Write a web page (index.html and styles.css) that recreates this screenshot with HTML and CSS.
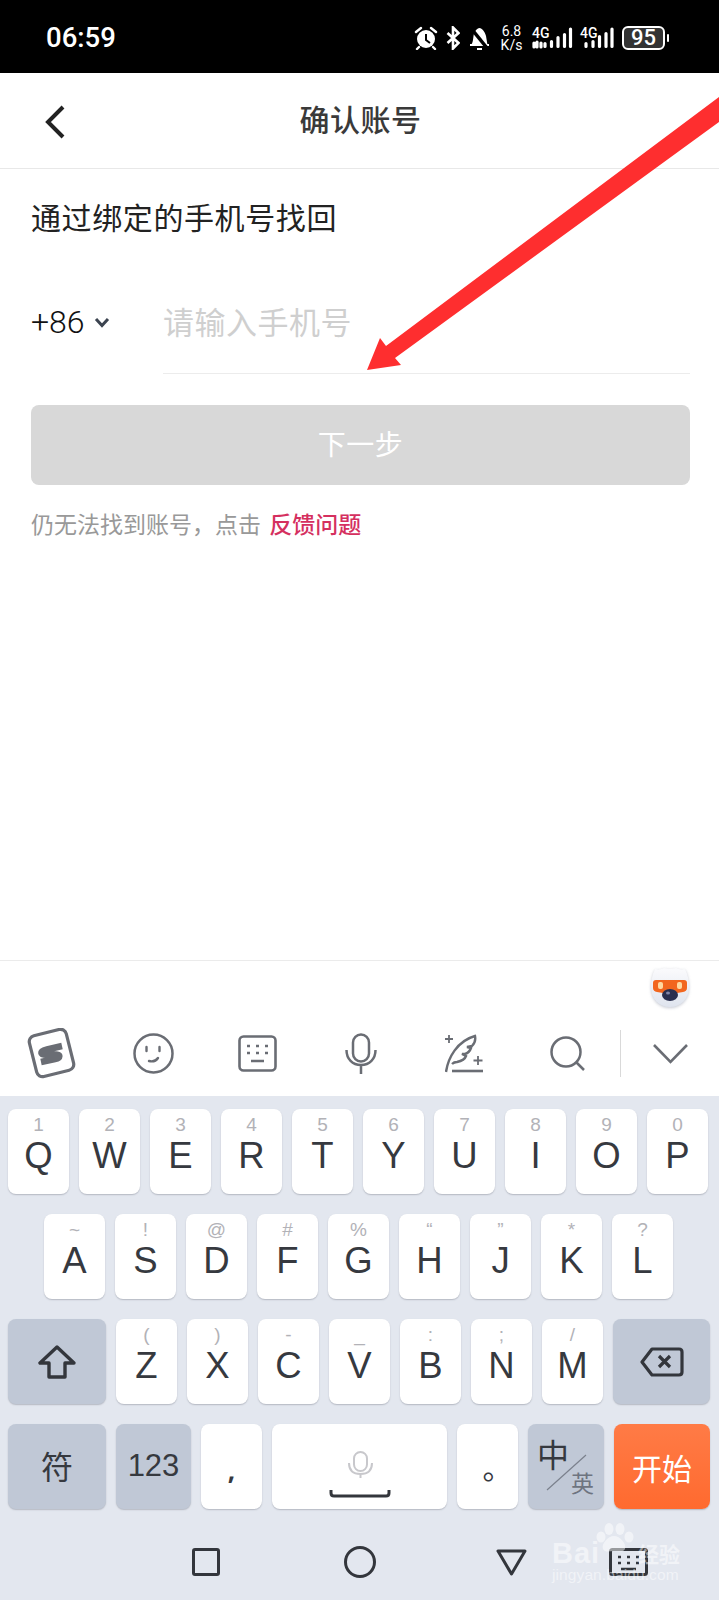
FILE: index.html
```html
<!DOCTYPE html>
<html lang="zh-CN">
<head>
<meta charset="utf-8">
<title>确认账号</title>
<link rel="stylesheet" href="styles.css">
</head>
<body>
<div class="page">
  <div class="status">
    <span class="time">06:59</span>
    <div class="status-icons">
      <svg class="s-alarm" width="24" height="24" viewBox="0 0 24 24"><circle cx="12" cy="13" r="9" fill="#fff"/><path d="M12 8v6l4 3" fill="none" stroke="#000" stroke-width="2"/><path d="M2 6l5-4M22 6l-5-4M5 21l-2 2M19 21l2 2" stroke="#fff" stroke-width="2.4" stroke-linecap="round"/></svg>
      <svg class="s-bt" width="14" height="24" viewBox="0 0 14 24"><path d="M1.500 7l11 10-5.500 5.500V1.500L12.500 7l-11 10" fill="none" stroke="#fff" stroke-width="2.600"/></svg>
      <svg class="s-bell" width="21" height="24" viewBox="0 0 21 24"><path d="M2 19c2-2 2-6 2.500-9C5 6 8 2 10.500 2S16 6 17 10l1.500 9z" fill="#fff"/><path d="M1 19h19" stroke="#fff" stroke-width="2"/><path d="M8 23h5" stroke="#fff" stroke-width="2"/><path d="M1 1l17 21" stroke="#000" stroke-width="3.500"/></svg>
      <div class="speed"><span>6.8</span><span>K/s</span></div>
      <div class="sig sig-a">
        <span class="g4">4G</span>
        <svg width="41" height="22" viewBox="0 0 41 22"><path d="M2 20v-4M5 20v-5M9 20v-4M13 19.500v-3M19.500 19.500v-5M26 19.500v-9M32.500 19.500v-12M38.500 19.500V2" fill="none" stroke="#fff" stroke-width="3.200" stroke-linecap="round"/></svg>
      </div>
      <div class="sig sig-b">
        <span class="g4">4G</span>
        <svg width="34" height="22" viewBox="0 0 34 22"><path d="M6 19.500v-3M13 19.500v-5M19.500 19.500v-10M26 19.500v-13M32 19.500V2" fill="none" stroke="#fff" stroke-width="3.200" stroke-linecap="round"/></svg>
      </div>
      <div class="battery"><span>95</span></div>
      <span class="nub"></span>
    </div>
  </div>

  <header class="topbar">
    <svg class="back" width="20" height="34" viewBox="0 0 20 34"><path d="M18 2L3 17l15 15" fill="none" stroke="#222" stroke-width="4"/></svg>
    <h1 class="title">确认账号</h1>
  </header>

  <main class="main">
    <h2 class="heading">通过绑定的手机号找回</h2>
    <div class="phone">
      <div class="code"><span>+86</span><svg width="16" height="11" viewBox="0 0 16 11"><path d="M2 2l6 6.500L14 2" fill="none" stroke="#3c4450" stroke-width="3"/></svg></div>
      <div class="input">请输入手机号</div>
    </div>
    <div class="next">下一步</div>
    <p class="hint">仍无法找到账号，点击 <span class="link">反馈问题</span></p>
  </main>

  <section class="toolbar">
    <div class="mascot-row">
      <svg class="mascot" width="38" height="41" viewBox="0 0 38 41">
        <defs><linearGradient id="eg" x1="0" y1="0" x2="0" y2="1"><stop offset="0" stop-color="#fbfbfd"/><stop offset="1" stop-color="#dfe4ee"/></linearGradient></defs>
        <path d="M4 3c4 1 7 0 9-1 3 1 9 1 12 0 2 1 5 2 9 1 3 6 4 12 4 18 0 12-8 20-19 20S0 33 0 21C0 15 1 9 4 3z" fill="url(#eg)"/>
        <path d="M5 14h28q3 0 3 3v5q0 3-4 4l-6 1H12l-6-1q-4-1-4-4v-5q0-3 3-3z" fill="#f2661e"/>
        <rect x="7" y="16" width="5" height="7" rx="2" fill="#ffd9a0"/><rect x="26" y="16" width="5" height="7" rx="2" fill="#ffd9a0"/>
        <ellipse cx="19" cy="29" rx="8" ry="6" fill="#2a2f4f"/><ellipse cx="17" cy="27" rx="2" ry="1.500" fill="#7f85a8"/>
      </svg>
    </div>
    <div class="tool-row">
      <svg class="t-s" width="50" height="51" viewBox="0 0 50 51"><rect x="5.500" y="4" width="38" height="42" rx="6" transform="rotate(-14 24.500 25)" fill="none" stroke="#6a6d74" stroke-width="3.200"/><path d="M35 18L20 21.500C12 23.500 13 27 20 27L28 26.500C34 26 33.500 30 28 31L14 34" fill="none" stroke="#6a6d74" stroke-width="6.500"/></svg>
      <svg class="t-smile" width="41" height="41" viewBox="0 0 41 41"><circle cx="20.500" cy="20.500" r="19" fill="none" stroke="#6a6d74" stroke-width="2.500"/><path d="M13.500 14v4M26.500 14v4" stroke="#6a6d74" stroke-width="2.400" stroke-linecap="round"/><path d="M16 28c4 1 7 0 9-3" fill="none" stroke="#6a6d74" stroke-width="2.400" stroke-linecap="round"/></svg>
      <svg class="t-kb" width="39" height="37" viewBox="0 0 39 37"><rect x="1.500" y="1.500" width="36" height="34" rx="4" fill="none" stroke="#6a6d74" stroke-width="2.600"/><path d="M9 11h3M18 11h3M27 11h3M9 18h3M18 18h3M27 18h3M13 26h13" stroke="#6a6d74" stroke-width="2.400"/></svg>
      <svg class="t-mic" width="32" height="41" viewBox="0 0 32 41"><rect x="8" y="1.500" width="16" height="27" rx="8" fill="none" stroke="#6a6d74" stroke-width="2.500"/><path d="M1.500 17c0 9 6 15 14.500 15s14.500-6 14.500-15M16 32v9" fill="none" stroke="#6a6d74" stroke-width="2.500"/></svg>
      <svg class="t-pen" width="38" height="39" viewBox="0 0 38 39"><path d="M1 38C3 24 12 7 30 2c1 5-1 8-3 10l-5 1 4 1c-1 3-3 5-6 6l-3 0 4 2c-1 3-4 5-9 6-2 0-4 1-5 2" fill="none" stroke="#6a6d74" stroke-width="2.400"/><path d="M7 37h31" stroke="#6a6d74" stroke-width="2.600"/><path d="M4 1v8M0 5h8M33 22v9M28.500 26.500h9" stroke="#6a6d74" stroke-width="1.800"/></svg>
      <svg class="t-search" width="35" height="35" viewBox="0 0 35 35"><circle cx="16" cy="16" r="14.500" fill="none" stroke="#6a6d74" stroke-width="2.500"/><path d="M26 26l8 8" stroke="#6a6d74" stroke-width="2.500"/></svg>
      <span class="t-div"></span>
      <svg class="t-down" width="35" height="21" viewBox="0 0 35 21"><path d="M1 2l16.500 17L34 2" fill="none" stroke="#6a6d74" stroke-width="2.600"/></svg>
    </div>
  </section>

  <section class="keyboard">
    <div class="row r1">
      <div class="key"><i>1</i><b>Q</b></div><div class="key"><i>2</i><b>W</b></div><div class="key"><i>3</i><b>E</b></div><div class="key"><i>4</i><b>R</b></div><div class="key"><i>5</i><b>T</b></div><div class="key"><i>6</i><b>Y</b></div><div class="key"><i>7</i><b>U</b></div><div class="key"><i>8</i><b>I</b></div><div class="key"><i>9</i><b>O</b></div><div class="key"><i>0</i><b>P</b></div>
    </div>
    <div class="row r2">
      <div class="key"><i>~</i><b>A</b></div><div class="key"><i>!</i><b>S</b></div><div class="key"><i>@</i><b>D</b></div><div class="key"><i>#</i><b>F</b></div><div class="key"><i>%</i><b>G</b></div><div class="key"><i>“</i><b>H</b></div><div class="key"><i>”</i><b>J</b></div><div class="key"><i>*</i><b>K</b></div><div class="key"><i>?</i><b>L</b></div>
    </div>
    <div class="row r3">
      <div class="key wide fn center"><svg width="38" height="34" viewBox="0 0 38 34"><path d="M19 2L2 18h9v14h16V18h9z" fill="none" stroke="#33363c" stroke-width="3.400" stroke-linejoin="round"/></svg></div>
      <div class="key"><i>(</i><b>Z</b></div><div class="key"><i>)</i><b>X</b></div><div class="key"><i>-</i><b>C</b></div><div class="key"><i>_</i><b>V</b></div><div class="key"><i>:</i><b>B</b></div><div class="key"><i>;</i><b>N</b></div><div class="key"><i>/</i><b>M</b></div>
      <div class="key back-key fn center"><svg width="44" height="30" viewBox="0 0 44 30"><path d="M12 2h27q3 0 3 3v20q0 3-3 3H12L2 15z" fill="none" stroke="#33363c" stroke-width="3.200" stroke-linejoin="round"/><path d="M19 9l11 11M30 9L19 20" stroke="#33363c" stroke-width="3.200"/></svg></div>
    </div>
    <div class="row r4">
      <div class="key wide fn center fu">符</div>
      <div class="key k123 fn center num">123</div>
      <div class="key center comma">,</div>
      <div class="key space center"><svg width="62" height="48" viewBox="0 0 62 48"><rect x="25" y="1" width="13" height="19" rx="6.500" fill="none" stroke="#c8c8cc" stroke-width="2"/><path d="M20 12c0 8 5 11 11.500 11S43 20 43 12M31.500 23v4" fill="none" stroke="#c8c8cc" stroke-width="2"/><path d="M2 39v3q0 3 3 3h52q3 0 3-3v-3" fill="none" stroke="#33363c" stroke-width="3"/></svg></div>
      <div class="key center period">。</div>
      <div class="key lang fn">
        <span class="zh">中</span>
        <svg class="slash" width="41" height="37" viewBox="0 0 41 37"><path d="M1 36L40 1" stroke="#7b818d" stroke-width="1.200"/></svg>
        <span class="en">英</span>
      </div>
      <div class="key go center">开始</div>
    </div>
    <nav class="navbar">
      <svg class="n-sq" width="28" height="28" viewBox="0 0 28 28"><rect x="1.500" y="1.500" width="25" height="25" rx="1.500" fill="none" stroke="#33363c" stroke-width="3"/></svg>
      <svg class="n-ci" width="32" height="32" viewBox="0 0 32 32"><circle cx="16" cy="16" r="14.500" fill="none" stroke="#33363c" stroke-width="3"/></svg>
      <svg class="n-tr" width="31" height="27" viewBox="0 0 31 27"><path d="M2 2h27L15.500 25z" fill="none" stroke="#33363c" stroke-width="3" stroke-linejoin="round"/></svg>
      <svg class="n-kb" width="39" height="28" viewBox="0 0 39 28"><rect x="1.500" y="1.500" width="36" height="25" rx="2" fill="none" stroke="#33363c" stroke-width="3"/><path d="M9 9h3M18 9h3M27 9h3M9 15h3M18 15h3M27 15h3M12 21h15" stroke="#33363c" stroke-width="2.600"/></svg>
    </nav>
  </section>

  <svg class="arrow" width="719" height="400" viewBox="0 0 719 400"><path d="M719 97V122L395 358 401 365 367 370 380 338 386 346z" fill="#fe2e2f"/></svg>

  <div class="watermark">
    <svg class="paw" width="40" height="30" viewBox="0 0 40 30"><g fill="#fff" fill-opacity=".5"><ellipse cx="6" cy="14" rx="4.500" ry="5.500"/><ellipse cx="14" cy="6" rx="4.500" ry="6"/><ellipse cx="25" cy="6" rx="4.500" ry="6"/><ellipse cx="34" cy="14" rx="4.500" ry="5.500"/><path d="M19 13c6 0 13 8 11 13-2 4-7 2-11 2s-9 2-11-2c-2-5 5-13 11-13z"/></g></svg>
    <div class="wm-top"><span class="wm-bai">Bai</span><span class="wm-jy">经验</span></div>
    <div class="wm-url">jingyan.baidu.com</div>
  </div>
</div>
</body>
</html>
```

FILE: styles.css
```css
* { box-sizing: border-box; }
html, body { margin: 0; padding: 0; }
body { width: 719px; height: 1600px; overflow: hidden; background: #fff; font-family: "Noto Sans CJK SC", "Noto Sans", sans-serif; }
.page { position: relative; width: 719px; height: 1600px; display: flex; flex-direction: column; overflow: hidden; }

/* status bar */
.status { height: 73px; background: #000; color: #fff; display: flex; align-items: center; padding: 0 50px 0 46px; flex: none; }
.time { font-family: Roboto, sans-serif; font-size: 27.500px; line-height: 30px; font-weight: 500; position: relative; top: 1px; }
.status-icons { display: flex; align-items: center; margin-left: auto; height: 30px; position: relative; top: 1px; }
.s-bt { margin-left: 8px; }
.s-bell { margin-left: 9px; }
.speed { margin-left: 10px; width: 23px; display: flex; flex-direction: column; align-items: center; font-family: Roboto, sans-serif; font-size: 14px; line-height: 14px; font-weight: 400; }
.sig { position: relative; height: 22px; flex: none; }
.sig svg { display: block; }
.sig-a { margin-left: 9px; width: 41px; }
.sig-b { margin-left: 7px; width: 34px; }
.g4 { position: absolute; left: 0; top: -1px; font-family: Roboto, sans-serif; font-size: 14px; line-height: 14px; font-weight: 500; }
.battery { margin-left: 8px; width: 43px; height: 24px; border: 2px solid #fff; border-radius: 6px; background: #333; display: flex; align-items: center; justify-content: center; font-family: Roboto, sans-serif; font-size: 22px; font-weight: 500; }
.nub { width: 2px; height: 8px; margin-left: 2px; background: #fff; border-radius: 1px; }

/* top bar */
.topbar { height: 96px; flex: none; border-bottom: 1px solid #e8e8e8; display: flex; align-items: center; justify-content: center; position: relative; }
.back { position: absolute; left: 45px; top: 32px; }
.title { margin: 0; font-size: 30px; line-height: 40px; font-weight: 500; color: #3a3a3a; letter-spacing: .5px; position: relative; top: -3px; left: 1px; }

/* form */
.main { flex: 1; padding: 0 29px 0 31px; }
.heading { margin: 26px 0 0; font-size: 30px; line-height: 42px; font-weight: 400; color: #222; letter-spacing: .6px; }
.phone { display: flex; margin-top: 43px; height: 94px; }
.code { width: 132px; flex: none; display: flex; align-items: center; gap: 9px; font-family: Roboto, sans-serif; font-size: 32px; font-weight: 300; color: #111; height: 84px; }
.input { flex: 1; height: 94px; line-height: 82px; border-bottom: 1px solid #ececec; font-size: 31px; color: #cfcfcf; letter-spacing: .5px; }
.next { margin-top: 31px; height: 80px; border-radius: 8px; background: #d8d8d8; color: #fff; font-size: 28px; line-height: 76px; text-align: center; letter-spacing: .5px; }
.hint { margin: 21px 0 0; font-size: 23px; line-height: 34px; color: #999; }
.link { color: #d5305f; font-weight: 500; margin-left: 3px; }

/* toolbar */
.toolbar { flex: none; height: 136px; border-top: 1px solid #ebebeb; background: #fff; }
.mascot-row { display: flex; justify-content: flex-end; padding: 5px 30px 0 0; height: 46px; }
.mascot { filter: drop-shadow(0 1px 1.500px rgba(70, 80, 110, .3)); }
.tool-row { display: flex; align-items: center; height: 50px; margin-top: 21px; padding-left: 27px; }
.t-smile { margin-left: 56px; }
.t-kb { margin-left: 64px; }
.t-mic { margin-left: 68px; }
.t-pen { margin-left: 68px; }
.t-search { margin-left: 67px; }
.t-div { width: 1px; height: 47px; margin-left: 35px; background: #d9d9d9; }
.t-down { margin-left: 32px; }

/* keyboard */
.keyboard { flex: none; height: 504px; background: #e3e7ef; padding-top: 13px; display: flex; flex-direction: column; gap: 20px; }
.row { display: flex; gap: 10px; height: 85px; flex: none; }
.r1 { padding-left: 8px; }
.r2 { padding-left: 44px; }
.r3, .r4 { padding-left: 8px; }
.key { width: 61px; height: 85px; flex: none; background: #fff; border-radius: 8px; box-shadow: 0 1px 1.500px #b4b8c2; display: flex; flex-direction: column; align-items: center; font-family: "Liberation Sans", sans-serif; color: #36393f; position: relative; }
.key i { font-style: normal; font-size: 19px; line-height: 20px; height: 20px; margin-top: 6px; color: #b2b2b7; font-weight: 400; }
.key b { font-weight: 400; font-size: 36.500px; line-height: 40px; margin-top: 1px; }
.center { justify-content: center; }
.fn { background: #c0c8d6; }
.wide { width: 98px; }
.back-key { width: 97px; }
.fu { font-family: "Noto Sans CJK SC", sans-serif; font-size: 32px; padding-bottom: 4px; }
.k123 { width: 75px; }
.num { font-size: 31px; padding-bottom: 2px; }
.comma { padding-top: 6px; font-weight: 700; font-size: 26px; font-family: "Noto Sans", sans-serif; }
.period { font-family: "Noto Sans CJK SC", sans-serif; font-weight: 400; font-size: 30px; padding-left: 20px; padding-bottom: 2px; }
.space { width: 175px; padding-top: 16px; }
.lang { width: 76px; }
.zh { font-family: "Noto Sans CJK SC", sans-serif; font-size: 32px; line-height: 38px; align-self: flex-start; margin: 10px 0 0 9px; }
.en { font-family: "Noto Sans CJK SC", sans-serif; font-size: 23px; line-height: 26px; color: #6e7480; align-self: flex-end; margin: -3px 10px 0 0; }
.slash { position: absolute; left: 18px; top: 30px; }
.go { width: 96px; background: linear-gradient(#ff7b46, #ff6a2f); color: #fff; font-family: "Noto Sans CJK SC", sans-serif; font-size: 30px; }

/* nav */
.navbar { display: flex; align-items: center; height: 28px; margin-top: 19px; padding-left: 192px; }
.n-ci { margin-left: 124px; }
.n-tr { margin-left: 120px; }
.n-kb { margin-left: 82px; }

/* overlays */
.arrow { position: absolute; left: 0; top: 0; pointer-events: none; }
.watermark { position: absolute; left: 552px; top: 1523px; width: 130px; height: 66px; color: rgba(255,255,255,.5); }
.paw { position: absolute; left: 43px; top: 0; }
.wm-top { position: absolute; left: 0; top: 18px; width: 128px; height: 24px; display: flex; justify-content: space-between; align-items: center; line-height: 24px; }
.wm-bai { font-family: "Liberation Sans", sans-serif; font-size: 29px; font-weight: 700; letter-spacing: 1px; }
.wm-jy { font-family: "Noto Sans CJK SC", sans-serif; font-size: 21px; font-weight: 700; }
.wm-url { position: absolute; left: 0; top: 43px; font-family: "Liberation Sans", sans-serif; font-size: 15.500px; line-height: 18px; letter-spacing: .1px; white-space: nowrap; }
```
